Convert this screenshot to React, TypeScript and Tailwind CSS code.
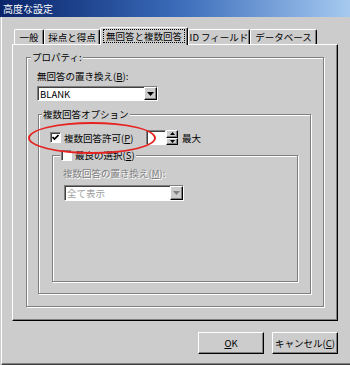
import type { ReactNode } from 'react';

const sunken = 'border border-t-[#808080] border-l-[#808080] border-r-white border-b-white shadow-[inset_1px_1px_0_#404040]';
const raised = 'border border-t-white border-l-white border-r-black border-b-black shadow-[inset_-1px_-1px_0_#808080]';

function Check({ checked }: { checked?: boolean }) {
  return (
    <span className={`w-[11px] h-[11px] bg-white flex items-center justify-center shrink-0 ${sunken}`}>
      {checked && (
        <svg width="7" height="7" viewBox="0 0 7 7">
          <polyline points="0.5,3 2.5,5 6.5,1" fill="none" stroke="#000" strokeWidth="1.7" />
        </svg>
      )}
    </span>
  );
}

function Arrow({ up, small, color = '#000' }: { up?: boolean; small?: boolean; color?: string }) {
  const w = small ? 5 : 7;
  const h = small ? 3 : 4;
  return (
    <svg width={w} height={h} viewBox={`0 0 ${w} ${h}`}>
      <polygon points={up ? `${w / 2},0 ${w},${h} 0,${h}` : `0,0 ${w},0 ${w / 2},${h}`} fill={color} />
    </svg>
  );
}

function Group({ legend, left, className, children }: { legend: ReactNode; left: string; className: string; children?: ReactNode }) {
  return (
    <div className={`relative border border-[#808080] shadow-[inset_1px_1px_0_#fff,1px_1px_0_#fff] ${className}`}>
      <div className={`absolute -top-[7px] ${left} bg-[#cccccc] px-[1px] flex items-center leading-[12px] h-[12px] whitespace-nowrap`}>{legend}</div>
      {children}
    </div>
  );
}

function Tab({ label, className, selected }: { label: string; className: string; selected?: boolean }) {
  if (selected) {
    return (
      <div className={`relative z-10 h-[18px] -mb-[1px] bg-[#cccccc] border-t border-l border-r border-t-white border-l-white border-r-black shadow-[inset_-1px_0_0_#808080] rounded-t-[2px] flex items-start justify-center pt-[2px] whitespace-nowrap ${className}`}>
        <span className="outline outline-1 outline-dotted outline-black px-[2px] leading-[12px]">{label}</span>
      </div>
    );
  }
  return (
    <div className={`h-[15px] bg-[#cccccc] border-t border-l border-r border-t-white border-l-white border-r-black shadow-[inset_-1px_0_0_#808080] rounded-t-[2px] flex items-center justify-center leading-[12px] whitespace-nowrap ${className}`}>
      {label}
    </div>
  );
}

function Select({ value, className, disabled }: { value: string; className: string; disabled?: boolean }) {
  return (
    <div className={`bg-white flex items-stretch ${sunken} ${className}`}>
      <div className={`flex-1 pl-[2px] flex items-center leading-[12px] ${disabled ? 'text-[#a0a0a0]' : 'text-black'}`}>{value}</div>
      <div className={`w-[13px] bg-[#cccccc] flex items-center justify-center ${raised}`}>
        <Arrow color={disabled ? '#808080' : '#000'} />
      </div>
    </div>
  );
}

export default function App() {
  return (
    <div className="relative w-[350px] h-[365px] bg-[#cccccc] overflow-hidden text-[9.5px] text-black whitespace-nowrap font-['Noto_Sans_CJK_JP',sans-serif]">
      <div className="h-[17px] bg-gradient-to-r from-[#0a246a] via-[#3a6ab8] to-[#a6caf0] text-white text-[10px] flex items-center pl-[3px] leading-[12px]">
        高度な設定
      </div>
      <div className="h-[348px] ml-[1px] border-l border-l-white border-b border-b-[#404040] shadow-[inset_0_-1px_0_#808080] pl-[10px] pt-[10px]">
        <div className="w-[326px]">
          <div className="h-[17px] flex items-end pl-[2px]">
            <Tab label="一般" className="w-[30px]" />
            <Tab label="採点と得点" className="w-[56px]" />
            <Tab label="無回答と複数回答" className="w-[88px]" selected />
            <Tab label="ID フィールド" className="w-[62px]" />
            <Tab label="データベース" className="w-[67px]" />
          </div>
          <div className={`h-[277px] ${raised} pt-[12px] pl-[13px]`}>
            <Group legend="プロパティ:" left="left-[4px]" className="w-[298px] h-[250px] pl-[10px] pt-[12px]">
              <div className="leading-[12px] h-[12px]">無回答の置き換え(<span className="underline">B</span>):</div>
              <Select value="BLANK" className="mt-[4px] w-[121px] h-[15px]" />
              <Group legend="複数回答オプション" left="left-[3px]" className="mt-[13px] ml-[1px] w-[273px] h-[180px] pl-[11px] pt-[15px]">
                <div className="h-[15px] flex items-center">
                  <Check checked />
                  <span className="ml-[3px] w-[82px] leading-[12px]">複数回答許可(<span className="underline">P</span>)</span>
                  <div className={`w-[20px] h-[15px] bg-white ${sunken}`} />
                  <div className="w-[12px] h-[15px] flex flex-col">
                    <div className={`flex-1 bg-[#cccccc] flex items-center justify-center ${raised}`}><Arrow up small /></div>
                    <div className={`flex-1 bg-[#cccccc] flex items-center justify-center ${raised}`}><Arrow small /></div>
                  </div>
                  <span className="ml-[4px] leading-[12px]">最大</span>
                </div>
                <Group
                  legend={<><Check /><span className="ml-[3px]">最良の選択(<span className="underline">S</span>)</span></>}
                  left="left-[7px]"
                  className="mt-[10px] ml-[2px] w-[246px] h-[127px] pl-[10px] pt-[11px]"
                >
                  <div className="leading-[12px] h-[12px] text-[#808080] [text-shadow:1px_1px_0_#fff]">
                    複数回答の置き換え(<span className="underline">M</span>):
                  </div>
                  <Select value="全て表示" disabled className="mt-[6px] ml-[1px] w-[120px] h-[16px]" />
                </Group>
              </Group>
            </Group>
          </div>
          <div className="mt-[11px] flex justify-end gap-[8px]">
            <button className={`w-[66px] h-[22px] bg-[#cccccc] leading-[12px] ${raised}`}><span className="underline">O</span>K</button>
            <button className={`w-[66px] h-[22px] bg-[#cccccc] leading-[12px] ${raised}`}>キャンセル(<span className="underline">C</span>)</button>
          </div>
        </div>
      </div>
      <div className="absolute left-[28px] top-[122px] w-[128px] h-[32px] border-2 border-[#e52421] rounded-[50%]" />
    </div>
  );
}
